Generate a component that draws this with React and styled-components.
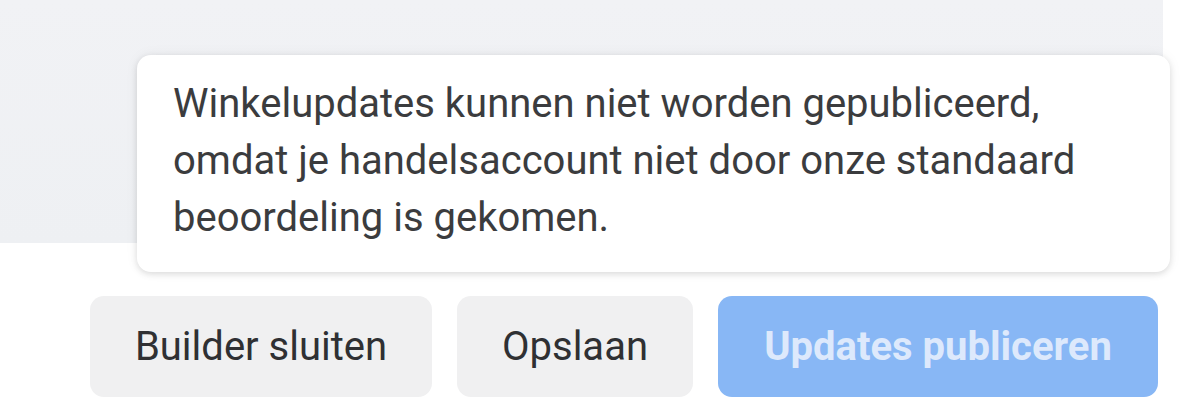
import React from "react";
import styled, { createGlobalStyle } from "styled-components";

const Global = createGlobalStyle`
    html, body {
        margin: 0;
        padding: 0;
        background: #ffffff;
        font-family: Roboto, "Liberation Sans", Arial, sans-serif;
    }
`

const Screen = styled.div`
    position: relative;
    width: 1185px;
    height: 413px;
    overflow: hidden;
    background: #ffffff;
`

const Preview = styled.div`
    width: 1163px;
    height: 243px;
    background: linear-gradient(180deg, #f1f2f5 0%, #eef0f3 100%);
`

const Footer = styled.div`
    display: flex;
    justify-content: flex-end;
    gap: 25px;
    padding: 53px 27px 0 0;
`

const Button = styled.button`
    height: 101px;
    width: ${(p) => p.$width}px;
    border: none;
    border-radius: 14px;
    font-family: Roboto, "Liberation Sans", Arial, sans-serif;
    font-size: 40px;
    font-weight: ${(p) => (p.$primary ? 700 : 400)};
    color: ${(p) => (p.$primary ? "#dde9fc" : "#2f3033")};
    background: ${(p) => (p.$primary ? "#88b7f5" : "#f0f0f1")};
    cursor: ${(p) => (p.$primary ? "not-allowed" : "pointer")};
    padding: 0;
`

const Tooltip = styled.div`
    position: absolute;
    left: 137px;
    top: 55px;
    width: 1033px;
    height: 217px;
    box-sizing: border-box;
    padding: 20px 36px;
    background: #ffffff;
    border-radius: 14px;
    box-shadow: 0 2px 6px rgba(0, 0, 0, 0.12), 0 0 14px rgba(0, 0, 0, 0.05);
    color: #3b3c3e;
    font-size: 40px;
    line-height: 57px;
    white-space: nowrap;
`

export default function App() {
    return (
        <Screen>
            <Global />
            <Preview />
            <Footer>
                <Button $width={342}>Builder sluiten</Button>
                <Button $width={236}>Opslaan</Button>
                <Button $width={440} $primary disabled>
                    Updates publiceren
                </Button>
            </Footer>
            <Tooltip>
                Winkelupdates kunnen niet worden gepubliceerd,
                <br />
                omdat je handelsaccount niet door onze standaard
                <br />
                beoordeling is gekomen.
            </Tooltip>
        </Screen>
    );
}
